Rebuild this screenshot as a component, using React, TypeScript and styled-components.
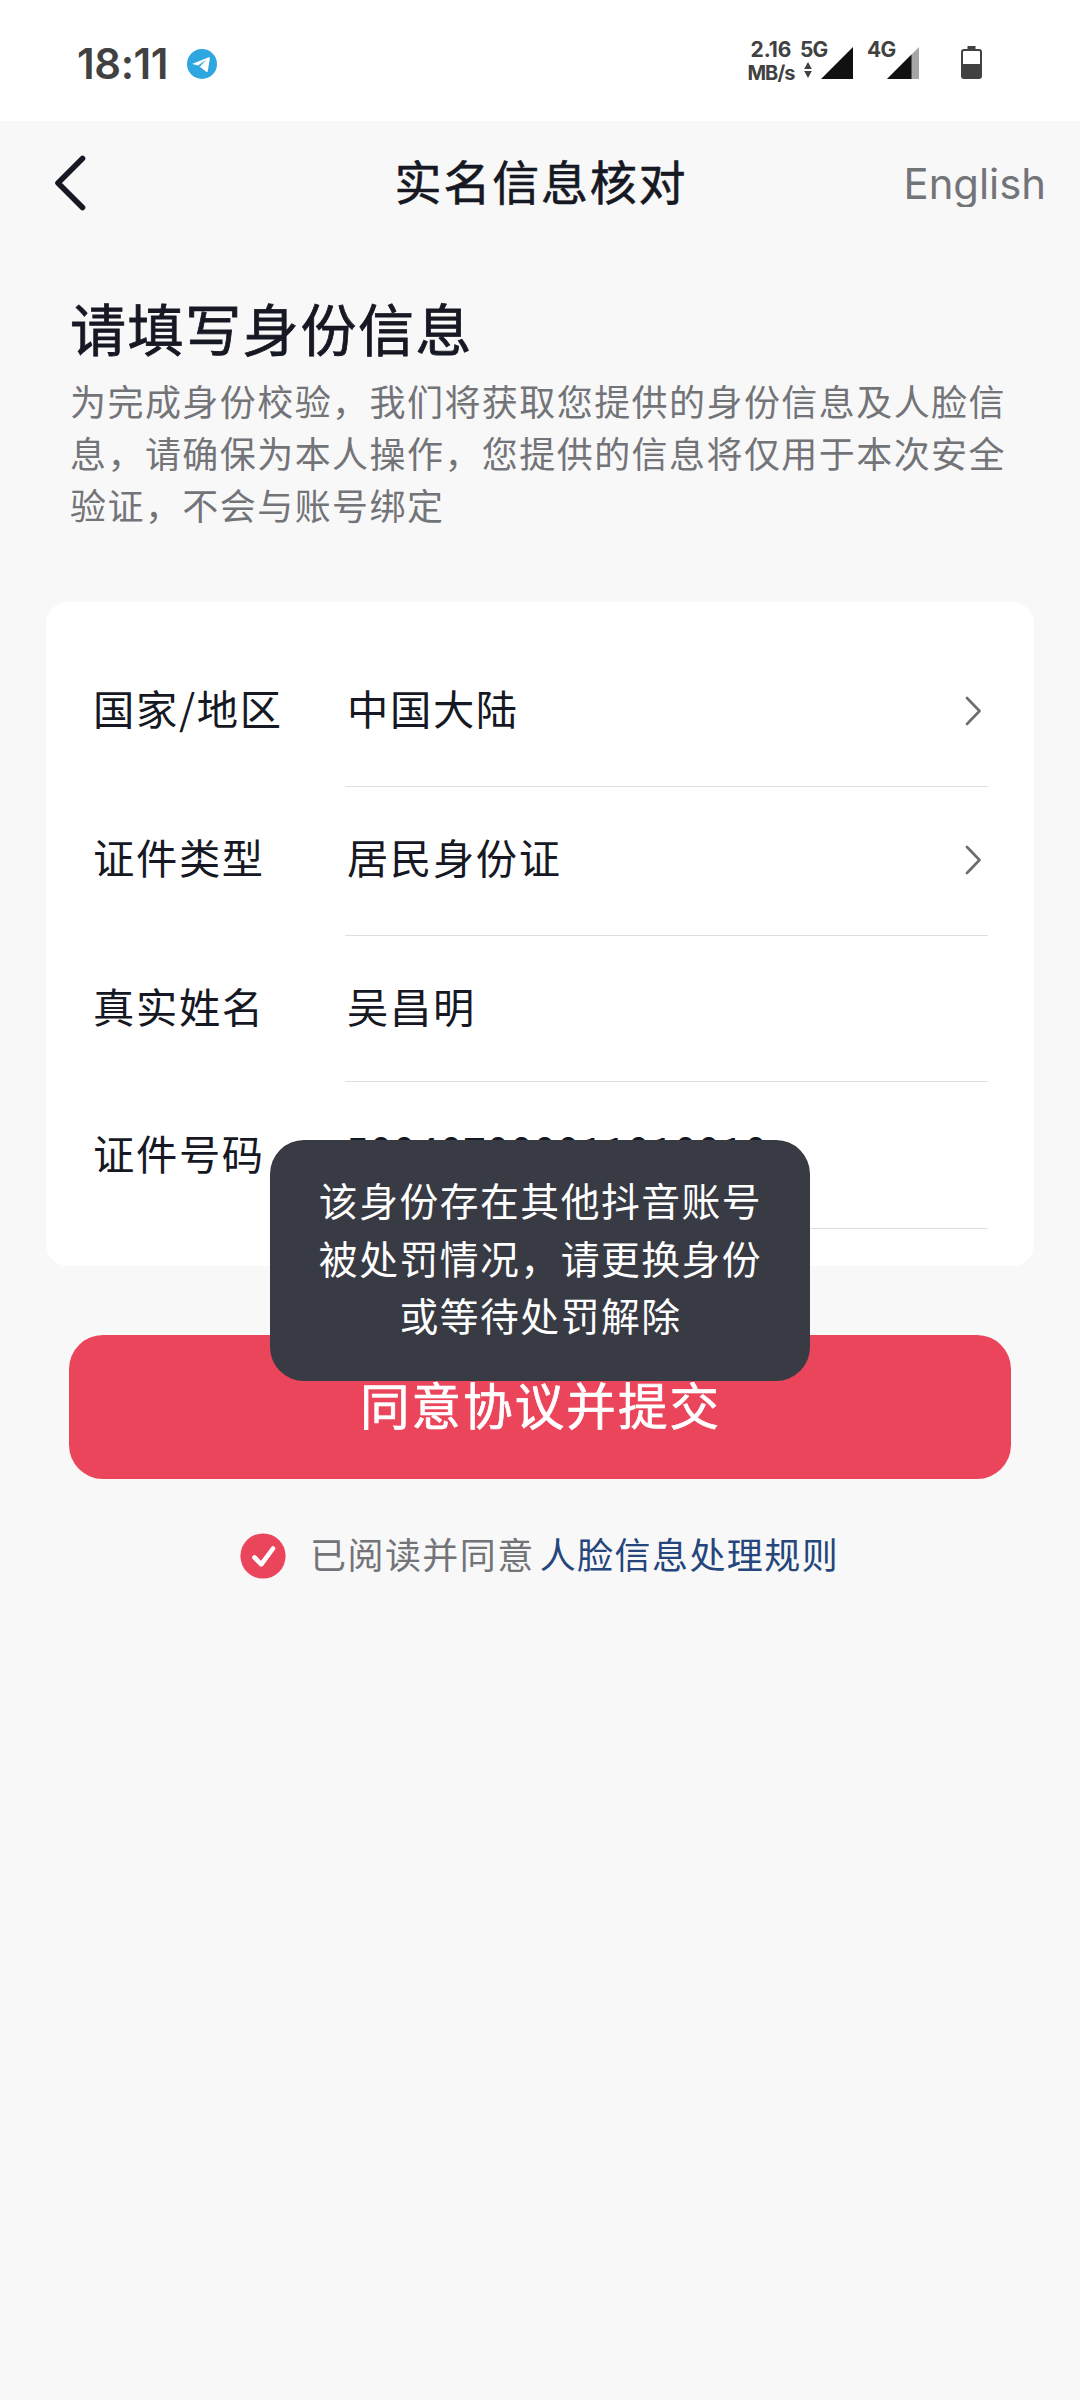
import React from "react";
import styled, { createGlobalStyle } from "styled-components";

const GlobalStyle = createGlobalStyle`
  * { box-sizing: border-box; }
  body {
    margin: 0;
    background: #f8f8f8;
    font-family: "Noto Sans CJK SC", "Noto Sans", sans-serif;
    color: #161823;
  }
`;

const Screen = styled.div`
  position: relative;
  width: 1080px;
  height: 2400px;
  background: #f8f8f8;
  overflow: hidden;
  display: flex;
  flex-direction: column;
`;

const StatusBar = styled.div`
  height: 121px;
  flex: none;
  background: #fff;
  padding: 0 98px 0 77px;
  display: flex;
  justify-content: space-between;
  font-family: Inter, sans-serif;
  color: #414141;
`;

const StatusLeft = styled.div`
  display: flex;
  align-items: center;
  height: 127px;
  gap: 22px;
`;

const Time = styled.span`
  width: 88px;
  font-size: 41.8px;
  font-weight: 600;
  line-height: 50px;
  letter-spacing: -0.4px;
  white-space: nowrap;
`;

const StatusRight = styled.div`
  display: flex;
  align-items: flex-start;
  padding-top: 38px;
`;

const Speed = styled.div`
  width: 48px;
  margin-right: 5px;
  text-align: center;
  font-size: 21px;
  font-weight: 700;
  line-height: 24px;
  white-space: nowrap;
`;

const SpeedUnit = styled.div`
  font-size: 20px;
  line-height: 22px;
  letter-spacing: -0.9px;
`;

const Network = styled.div<{ $gap: number }>`
  display: flex;
  align-items: flex-start;
  margin-right: ${(p) => p.$gap}px;
`;

const NetworkLabel = styled.div<{ $width: number }>`
  width: ${(p) => p.$width}px;
  font-size: 21px;
  font-weight: 700;
  line-height: 24px;
  letter-spacing: -0.8px;
  white-space: nowrap;
  svg { display: block; margin: 0 0 0 4px; }
`;

const SignalIcon = styled.svg`
  display: block;
  margin-top: 9px;
`;

const BatteryIcon = styled.svg`
  display: block;
  margin-top: 8px;
`;

const Header = styled.header`
  height: 124px;
  flex: none;
  display: grid;
  grid-template-columns: 240px 1fr 240px;
  align-items: center;
  padding: 0 34px 0 53px;
`;

const BackIcon = styled.svg`
  display: block;
`;

const Title = styled.h1`
  margin: 0;
  padding: 0 17px 7px 0;
  text-align: center;
  font-size: 47px;
  font-weight: 400;
  line-height: 60px;
  letter-spacing: 1.8px;
  -webkit-text-stroke: 0.6px currentColor;
`;

const Language = styled.div`
  justify-self: end;
  height: 47px;
  overflow: hidden;
  font-family: Inter, sans-serif;
  font-size: 41.8px;
  line-height: 48px;
  letter-spacing: 0;
  color: #737478;
  white-space: nowrap;
`;

const Intro = styled.section`
  padding: 42px 70px 0;
`;

const Heading = styled.h2`
  margin: 0 0 7px;
  font-size: 56px;
  font-weight: 400;
  line-height: 80px;
  letter-spacing: 1.6px;
  -webkit-text-stroke: 0.8px currentColor;
`;

const Description = styled.p`
  margin: 0;
  height: 156px;
  font-size: 36px;
  line-height: 52.1px;
  letter-spacing: 1.44px;
  color: #737478;
`;

const Card = styled.section`
  margin: 72px 46px 0;
  height: 664px;
  padding: 35px 46px 0 47px;
  border-radius: 22px;
  background: #fff;
`;

const Row = styled.div<{ $height: number; $lift: number }>`
  height: ${(p) => p.$height}px;
  display: grid;
  grid-template-columns: 252px 643px;
  --lift: ${(p) => p.$lift}px;
`;

const Cell = styled.div`
  display: flex;
  align-items: center;
  justify-content: space-between;
  padding: 0 7px var(--lift) 0;
  font-size: 41.3px;
  line-height: 60px;
  letter-spacing: 1.65px;
  white-space: nowrap;
  border-bottom: 1px solid transparent;
`;

const ValueCell = styled(Cell)<{ $numeric: boolean }>`
  padding-left: ${(p) => (p.$numeric ? 1 : 2)}px;
  letter-spacing: ${(p) => (p.$numeric ? 0.5 : 1.65)}px;
  border-bottom-color: #dededf;
  ${(p) => p.$numeric && "padding-bottom: 13px;"}
`;

const Chevron = styled.svg`
  display: block;
  flex: none;
  margin-top: 7px;
`;

const Submit = styled.button`
  margin: 69px 69px 0;
  height: 144px;
  border: 0;
  border-radius: 34px;
  background: #ea455b;
  color: #fff;
  font-family: inherit;
  font-size: 49.5px;
  font-weight: 400;
  line-height: 70px;
  letter-spacing: 2.1px;
  padding: 0 0 6px 1px;
  -webkit-text-stroke: 0.7px currentColor;
`;

const Agreement = styled.div`
  margin-top: 52px;
  padding-left: 240px;
  height: 50px;
  display: flex;
  align-items: center;
  font-size: 36px;
  line-height: 50px;
  letter-spacing: 1.44px;
  color: #737478;
  white-space: nowrap;
`;

const CheckIcon = styled.svg`
  display: block;
  margin-right: 24px;
`;

const AgreementText = styled.span`
  padding-bottom: 7px;
`;

const Link = styled(AgreementText)`
  margin-left: 5px;
  color: #25467c;
`;

const Toast = styled.div`
  position: absolute;
  left: 270px;
  top: 1140px;
  width: 540px;
  height: 241px;
  border-radius: 34px;
  background: #393b44;
  color: #fff;
  padding: 31px 45px 0 46px;
  text-align: center;
  font-size: 38.8px;
  line-height: 57.6px;
  letter-spacing: 1.5px;
`;

const fields = [
  { label: "国家/地区", value: "中国大陆", arrow: true, numeric: false, height: 150, lift: 9 },
  { label: "证件类型", value: "居民身份证", arrow: true, numeric: false, height: 149, lift: 10 },
  { label: "真实姓名", value: "吴昌明", arrow: false, numeric: false, height: 146, lift: 7 },
  { label: "证件号码", value: "500407000011010010", arrow: false, numeric: true, height: 147, lift: 6 },
];

export default function App() {
  return (
    <>
      <GlobalStyle />
      <Screen>
        <StatusBar>
          <StatusLeft>
            <Time>18:11</Time>
            <svg width="30" height="30" viewBox="0 0 30 30">
              <circle cx="15" cy="15" r="15" fill="#2ea6df" />
              <path
                d="M5 15 21.8 8.3c.8-.3 1.3.1 1.1 1L20.8 22c-.2 1-.8 1.2-1.6.7l-8-6.1z"
                fill="#fff"
              />
              <path d="m11 16.4 8.4-5.8-6.6 7.2z" fill="#2ea6df" />
            </svg>
          </StatusLeft>
          <StatusRight>
            <Speed>
              <div>2.16</div>
              <SpeedUnit>MB/s</SpeedUnit>
            </Speed>
            <Network $gap={14}>
              <NetworkLabel $width={21}>
                5G
                <svg width="8" height="16" viewBox="0 0 8 16" fill="#414141">
                  <path d="M4 0 7.8 7H.2zM4 16 .2 9h7.6z" />
                </svg>
              </NetworkLabel>
              <SignalIcon width="32" height="32" viewBox="0 0 32 32">
                <path d="M0 32 32 0v32z" fill="#111" />
              </SignalIcon>
            </Network>
            <Network $gap={42}>
              <NetworkLabel $width={20}>4G</NetworkLabel>
              <SignalIcon width="32" height="32" viewBox="0 0 32 32">
                <path d="M0 32 32 0v32z" fill="#a6a6a6" />
                <path d="M0 32 24.5 7.5V32z" fill="#111" />
              </SignalIcon>
            </Network>
            <BatteryIcon width="21" height="33" viewBox="0 0 21 33">
              <path d="M6.5 0h8v4h-8z" fill="#414141" />
              <rect x="1" y="4" width="19" height="28" rx="2" fill="#fff" stroke="#414141" strokeWidth="2" />
              <path d="M1 18h19v12a2 2 0 0 1-2 2H3a2 2 0 0 1-2-2z" fill="#414141" />
            </BatteryIcon>
          </StatusRight>
        </StatusBar>

        <Header>
          <BackIcon width="36" height="56" viewBox="0 0 36 56" fill="none">
            <path
              d="M29.5 3.5 5 28l24.5 24.5"
              stroke="#161823"
              strokeWidth="5.6"
              strokeLinecap="round"
              strokeLinejoin="round"
            />
          </BackIcon>
          <Title>实名信息核对</Title>
          <Language>English</Language>
        </Header>

        <Intro>
          <Heading>请填写身份信息</Heading>
          <Description>
            为完成身份校验，我们将获取您提供的身份信息及人脸信息，请确保为本人操作，您提供的信息将仅用于本次安全验证，不会与账号绑定
          </Description>
        </Intro>

        <Card>
          {fields.map((f) => (
            <Row key={f.label} $height={f.height} $lift={f.lift}>
              <Cell>{f.label}</Cell>
              <ValueCell $numeric={f.numeric}>
                {f.value}
                {f.arrow && (
                  <Chevron width="16" height="30" viewBox="0 0 16 30" fill="none">
                    <path
                      d="M2 2l12.5 13L2 28"
                      stroke="#6c6d70"
                      strokeWidth="2.6"
                      strokeLinecap="round"
                      strokeLinejoin="round"
                    />
                  </Chevron>
                )}
              </ValueCell>
            </Row>
          ))}
        </Card>

        <Submit>同意协议并提交</Submit>

        <Agreement>
          <CheckIcon width="46" height="46" viewBox="0 0 46 46" fill="none">
            <circle cx="23" cy="23" r="22.6" fill="#ea455b" />
            <path
              d="m14.5 24.5 6.8 6.8L33 15.5"
              stroke="#fff"
              strokeWidth="4.6"
              strokeLinecap="round"
              strokeLinejoin="round"
            />
          </CheckIcon>
          <AgreementText>已阅读并同意</AgreementText>
          <Link>人脸信息处理规则</Link>
        </Agreement>

        <Toast role="status">
          该身份存在其他抖音账号
          <br />
          被处罚情况，请更换身份
          <br />
          或等待处罚解除
        </Toast>
      </Screen>
    </>
  );
}
